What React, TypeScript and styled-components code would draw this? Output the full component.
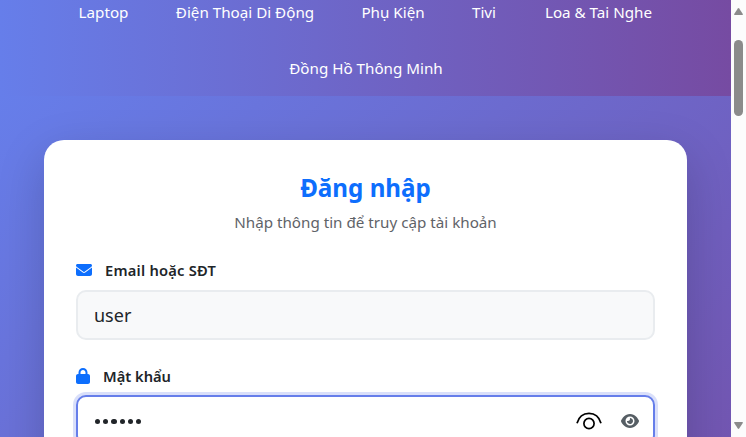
import React from "react";
import styled, { createGlobalStyle } from "styled-components";
import { FaEnvelope, FaEye, FaLock } from "react-icons/fa6";

const GlobalStyle = createGlobalStyle`
  * { box-sizing: border-box; }
  body {
    margin: 0;
    overflow: hidden;
    color: #212529;
    font-family: "Segoe UI", "Noto Sans", "Open Sans", sans-serif;
    font-size: 15.2px;
    line-height: 24px;
  }
`;

const Window = styled.div`
  display: flex;
  width: 746px;
  height: 437px;
  overflow: hidden;
`;

const Page = styled.div`
  width: 731px;
  height: 437px;
  overflow: hidden;
`;

const Nav = styled.nav`
  display: flex;
  flex-wrap: wrap;
  justify-content: center;
  align-content: flex-start;
  column-gap: 48px;
  row-gap: 32px;
  height: 96px;
  padding-left: 1px;
  background: linear-gradient(90deg, #667eea 0%, #764ba2 100%);
`;

const NavLink = styled.a<{ $width: number }>`
  display: flex;
  justify-content: center;
  width: ${(p) => p.$width}px;
  color: #fff;
  white-space: nowrap;
`;

const Section = styled.main`
  height: 640px;
  padding: 44px;
  background: linear-gradient(135deg, #667eea 0%, #764ba2 100%);
`;

const Card = styled.form`
  height: 530px;
  padding: 32px;
  border-radius: 20px;
  background: #fff;
  box-shadow: 0 16px 48px rgba(0, 0, 0, 0.175);
`;

const Heading = styled.h1`
  margin: 0 0 7px;
  color: #0d6efd;
  font-size: 24.2px;
  font-weight: 700;
  line-height: 31px;
  text-align: center;
`;

const Subtitle = styled.p`
  margin: 0 0 24.4px;
  color: #5f6368;
  text-align: center;
`;

const Field = styled.div`
  margin-bottom: 24px;
`;

const Label = styled.label<{ $spacing?: number }>`
  display: flex;
  align-items: center;
  gap: 13px;
  height: 24px;
  margin-bottom: 7.4px;
  font-size: 14.7px;
  font-weight: 600;
  letter-spacing: ${(p) => p.$spacing ?? 0}px;

  svg {
    flex: none;
    color: #0d6efd;
  }
`;

const LockIcon = styled(FaLock)`
  width: 14px;
  height: 16px;
`;

const Control = styled.div<{ $focused?: boolean }>`
  display: flex;
  align-items: center;
  justify-content: space-between;
  height: 50px;
  padding: 1px 14px 0 16px;
  border: 2px solid ${(p) => (p.$focused ? "#667eea" : "#e9ecef")};
  border-radius: 10px;
  background: ${(p) => (p.$focused ? "#fff" : "#f8f9fa")};
  box-shadow: ${(p) => (p.$focused ? "0 0 0 3px rgba(102, 126, 234, 0.25)" : "none")};
  font-size: 18px;
`;

const Dots = styled.div`
  display: flex;
  gap: 3px;
  padding: 2px 0 0 1px;
`;

const Dot = styled.i`
  width: 5.2px;
  height: 5.2px;
  border-radius: 50%;
  background: #212529;
`;

const Actions = styled.div`
  display: flex;
  align-items: center;
  gap: 19px;
  padding-top: 1px;
  color: #565e64;
`;

const Scrollbar = styled.div`
  display: flex;
  flex-direction: column;
  align-items: center;
  width: 15px;
  padding: 8px 0;
  background: #fcfcfc;
`;

const Thumb = styled.div`
  width: 9px;
  height: 76px;
  margin: 25px 0 auto;
  border-radius: 5px;
  background: #8b8b8b;
`;

const RevealIcon = () => (
  <svg width="26" height="18" viewBox="0 0 26 18" fill="none" stroke="#000" strokeWidth="1.7">
    <path d="M1 11.2C2.8 4.8 7.2 1.3 13 1.3S23.2 4.8 25 11.2" />
    <circle cx="13" cy="11.5" r="5.1" />
  </svg>
);

const Arrow = ({ down = false }: { down?: boolean }) => (
  <svg width="9" height="7" viewBox="0 0 9 7" fill="#8b8b8b">
    <path
      transform={down ? "rotate(180 4.5 3.5)" : undefined}
      d="M3.8.5Q4.5-.3 5.2.5L8.8 6Q9.2 7 8.3 7H.7Q-.2 7 .2 6Z"
    />
  </svg>
);

export default function App() {
  return (
    <>
      <GlobalStyle />
      <Window>
        <Page>
          <Nav>
            <NavLink $width={49}>Laptop</NavLink>
            <NavLink $width={138}>Điện Thoại Di Động</NavLink>
            <NavLink $width={62}>Phụ Kiện</NavLink>
            <NavLink $width={24}>Tivi</NavLink>
            <NavLink $width={109}>Loa &amp; Tai Nghe</NavLink>
            <NavLink $width={155}>Đồng Hồ Thông Minh</NavLink>
          </Nav>
          <Section>
            <Card>
              <Heading>Đăng nhập</Heading>
              <Subtitle>Nhập thông tin để truy cập tài khoản</Subtitle>
              <Field>
                <Label $spacing={0.23}>
                  <FaEnvelope size={16} />
                  <span>Email hoặc SĐT</span>
                </Label>
                <Control>user</Control>
              </Field>
              <Field>
                <Label>
                  <LockIcon />
                  <span>Mật khẩu</span>
                </Label>
                <Control $focused>
                  <Dots>
                    {Array.from({ length: 6 }, (_, i) => (
                      <Dot key={i} />
                    ))}
                  </Dots>
                  <Actions>
                    <RevealIcon />
                    <FaEye size={18} />
                  </Actions>
                </Control>
              </Field>
            </Card>
          </Section>
        </Page>
        <Scrollbar>
          <Arrow />
          <Thumb />
          <Arrow down />
        </Scrollbar>
      </Window>
    </>
  );
}
